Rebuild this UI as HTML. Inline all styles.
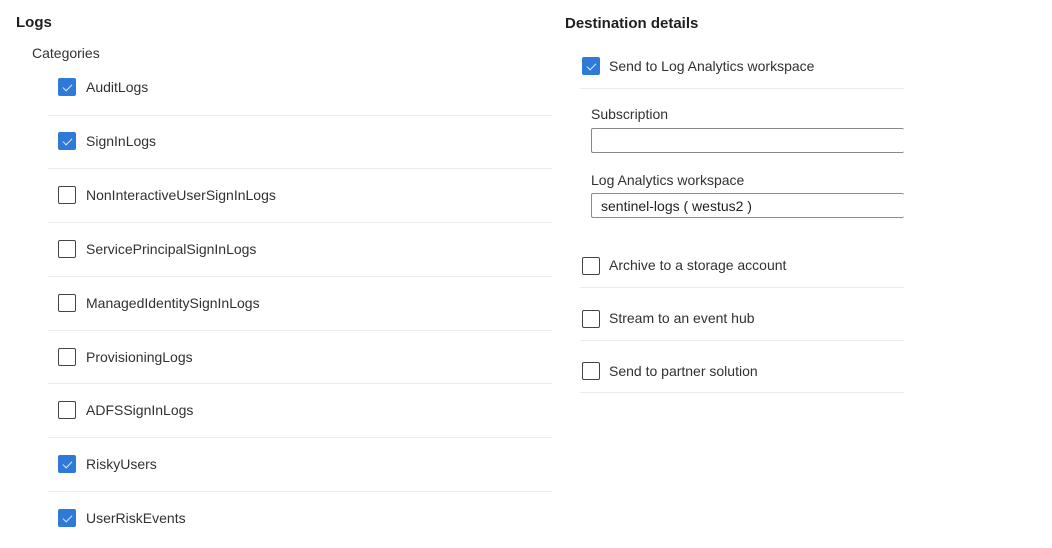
<!DOCTYPE html>
<html><head><style>
body{margin:0;width:1052px;height:548px;background:#fff;font-family:"Liberation Sans",sans-serif;color:#323130;position:relative;overflow:hidden}
.a{position:absolute;white-space:nowrap}
.h{font-weight:bold;font-size:15px;color:#201f1e}
.t{font-size:14px}
.cb{position:absolute;width:18px;height:18px;box-sizing:border-box;border:1px solid #444;border-radius:2px;background:#fff}
.cb.on{background:#2f7ad8;border-color:#2f7ad8}
.cb.on::after{content:"";position:absolute;left:5.5px;top:2.5px;width:4px;height:8px;border:solid #dfeafa;border-width:0 1px 1px 0;transform:rotate(45deg)}
.ln{position:absolute;height:1px;background:#edebe9}
.in{position:absolute;box-sizing:border-box;border:1px solid #8a8886;border-radius:2px;border-right:none}
</style></head><body>
<div class="a h" style="left:16px;top:14px">Logs</div>
<div class="a t" style="left:32px;top:45px">Categories</div>

<div class="cb on" style="left:58px;top:78px"></div><div class="a t" style="left:86px;top:79px">AuditLogs</div>
<div class="ln" style="left:48px;top:115px;width:504px"></div>
<div class="cb on" style="left:58px;top:132px"></div><div class="a t" style="left:86px;top:133px">SignInLogs</div>
<div class="ln" style="left:48px;top:168px;width:504px"></div>
<div class="cb" style="left:58px;top:186px"></div><div class="a t" style="left:86px;top:187px">NonInteractiveUserSignInLogs</div>
<div class="ln" style="left:48px;top:222px;width:504px"></div>
<div class="cb" style="left:58px;top:240px"></div><div class="a t" style="left:86px;top:241px">ServicePrincipalSignInLogs</div>
<div class="ln" style="left:48px;top:276px;width:504px"></div>
<div class="cb" style="left:58px;top:294px"></div><div class="a t" style="left:86px;top:295px">ManagedIdentitySignInLogs</div>
<div class="ln" style="left:48px;top:330px;width:504px"></div>
<div class="cb" style="left:58px;top:348px"></div><div class="a t" style="left:86px;top:349px">ProvisioningLogs</div>
<div class="ln" style="left:48px;top:383px;width:504px"></div>
<div class="cb" style="left:58px;top:401px"></div><div class="a t" style="left:86px;top:402px">ADFSSignInLogs</div>
<div class="ln" style="left:48px;top:437px;width:504px"></div>
<div class="cb on" style="left:58px;top:455px"></div><div class="a t" style="left:86px;top:456px">RiskyUsers</div>
<div class="ln" style="left:48px;top:491px;width:504px"></div>
<div class="cb on" style="left:58px;top:509px"></div><div class="a t" style="left:86px;top:510px">UserRiskEvents</div>

<div class="a h" style="left:565px;top:15px">Destination details</div>
<div class="cb on" style="left:582px;top:57px"></div><div class="a t" style="left:609px;top:58px">Send to Log Analytics workspace</div>
<div class="ln" style="left:580px;top:88px;width:324px"></div>
<div class="a t" style="left:591px;top:106px">Subscription</div>
<div class="in" style="left:591px;top:128px;width:313px;height:25px"></div>
<div class="a t" style="left:591px;top:172px">Log Analytics workspace</div>
<div class="in" style="left:591px;top:193px;width:313px;height:25px;border-color:#a673c8;border-right:none"></div>
<div class="a t" style="left:601px;top:198px;color:#201f1e">sentinel-logs ( westus2 )</div>
<div class="cb" style="left:582px;top:257px"></div><div class="a t" style="left:609px;top:257px">Archive to a storage account</div>
<div class="ln" style="left:580px;top:287px;width:324px"></div>
<div class="cb" style="left:582px;top:310px"></div><div class="a t" style="left:609px;top:310px">Stream to an event hub</div>
<div class="ln" style="left:580px;top:340px;width:324px"></div>
<div class="cb" style="left:582px;top:362px"></div><div class="a t" style="left:609px;top:363px">Send to partner solution</div>
<div class="ln" style="left:580px;top:392px;width:324px"></div>
</body></html>
